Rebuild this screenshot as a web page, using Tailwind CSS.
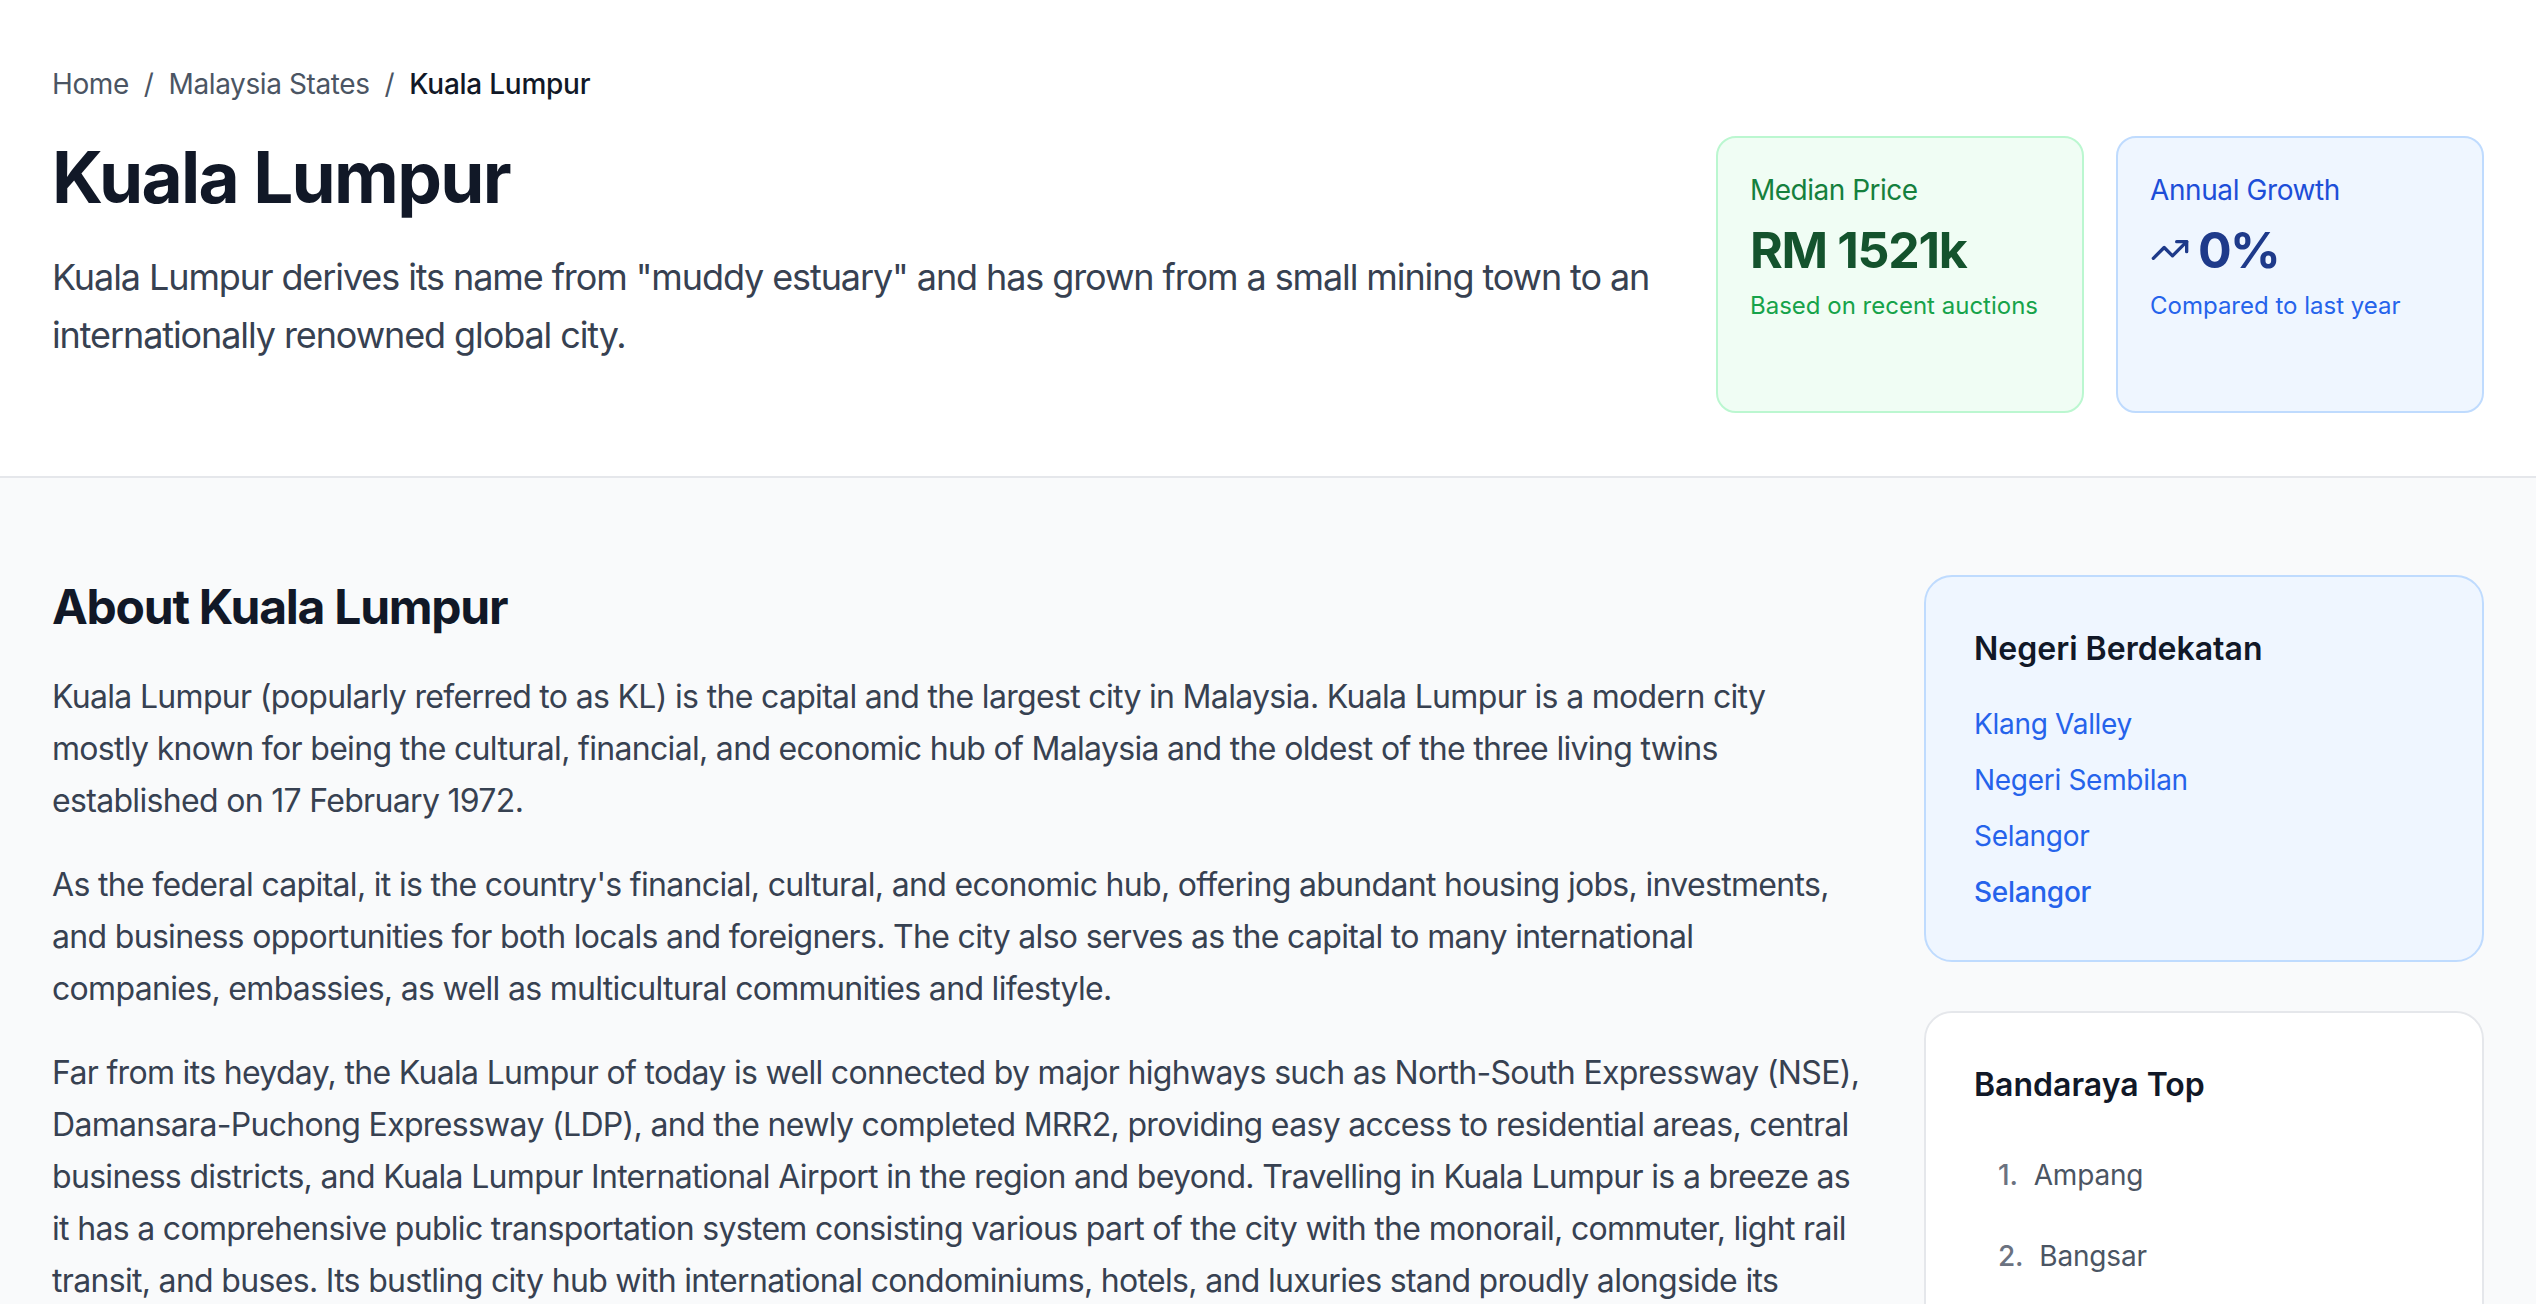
<!DOCTYPE html>
<html lang="en">
<head>
    <meta charset="UTF-8">
    <meta name="viewport" content="width=device-width, initial-scale=1.0">
    <title>Kuala Lumpur</title>
    <script src="https://cdn.jsdelivr.net/npm/@tailwindcss/browser@4"></script>
</head>
<body class="h-screen overflow-hidden bg-[#f9fafb] font-['Inter',sans-serif]">
    <!-- Header -->
    <header class="bg-white border-b-2 border-[#e5e7eb] h-[478px] px-[52px] pt-[66px]">
        <nav class="flex items-center text-[28px] leading-[36px] tracking-[-0.4px] text-[#4b5563]">
            <span>Home</span>
            <span class="mx-[15px]">/</span>
            <span>Malaysia States</span>
            <span class="mx-[15px]">/</span>
            <span class="text-[#111827] font-medium tracking-[-0.25px]">Kuala Lumpur</span>
        </nav>
        <div class="flex justify-between mt-[34px]">
            <div class="w-[1620px]">
                <h1 class="text-[71px] leading-[80px] font-bold tracking-[-1.7px] text-[#111827] mt-[1px]">Kuala Lumpur</h1>
                <p class="mt-[31px] text-[36px] leading-[58px] tracking-[-1.1px] text-[#374151]">Kuala Lumpur derives its name from "muddy estuary" and has grown from a small mining town to an internationally renowned global city.</p>
            </div>
            <div class="flex gap-[32px]">
                <div class="w-[368px] h-[277px] rounded-[20px] border-2 border-[#bbf7d0] bg-[#f0fdf4] pl-[32px] pt-[32px]">
                    <div class="text-[28px] leading-[40px] tracking-[-0.5px] text-[#15803d]">Median Price</div>
                    <div class="mt-[8px] text-[50px] leading-[64px] tracking-[-1.3px] font-bold text-[#14532d]">RM 1521k</div>
                    <div class="mt-[6px] text-[24px] leading-[36px] text-[#16a34a]">Based on recent auctions</div>
                </div>
                <div class="w-[368px] h-[277px] rounded-[20px] border-2 border-[#bfdbfe] bg-[#eff6ff] pl-[32px] pt-[32px]">
                    <div class="text-[28px] leading-[40px] tracking-[-0.4px] text-[#1d4ed8]">Annual Growth</div>
                    <div class="mt-[8px] flex items-center text-[50px] leading-[64px] font-bold tracking-[-1.6px] text-[#1e3a8a]">
                        <svg class="w-[40px] h-[40px] mr-[8px]" viewBox="0 0 24 24" fill="none" stroke="currentColor" stroke-width="2" stroke-linecap="round" stroke-linejoin="round"><polyline points="22 7 13.5 15.5 8.5 10.5 2 17"></polyline><polyline points="16 7 22 7 22 13"></polyline></svg>
                        <span>0%</span>
                    </div>
                    <div class="mt-[6px] text-[24px] leading-[36px] text-[#2563eb]">Compared to last year</div>
                </div>
            </div>
        </div>
    </header>

    <!-- Content -->
    <main class="flex justify-between px-[52px] pt-[100px]">
        <article class="w-[1812px] text-[32px] leading-[52px] tracking-[-0.68px] text-[#374151]">
            <h2 class="text-[48px] leading-[64px] font-bold tracking-[-1.25px] text-[#111827] -mt-[3px] mb-[32px]">About Kuala Lumpur</h2>
            <p class="mb-[32px]">Kuala Lumpur (popularly referred to as KL) is the capital and the largest city in Malaysia. Kuala Lumpur is a modern city mostly known for being the cultural, financial, and economic hub of Malaysia and the oldest of the three living twins established on 17 February 1972.</p>
            <p class="mb-[32px]">As the federal capital, it is the country's financial, cultural, and economic hub, offering abundant housing jobs, investments, and business opportunities for both locals and foreigners. The city also serves as the capital to many international companies, embassies, as well as multicultural communities and lifestyle.</p>
            <p>Far from its heyday, the Kuala Lumpur of today is well connected by major highways such as North-South Expressway (NSE), Damansara-Puchong Expressway (LDP), and the newly completed MRR2, providing easy access to residential areas, central business districts, and Kuala Lumpur International Airport in the region and beyond. Travelling in Kuala Lumpur is a breeze as it has a comprehensive public transportation system consisting various part of the city with the monorail, commuter, light rail transit, and buses. Its bustling city hub with international condominiums, hotels, and luxuries stand proudly alongside its</p>
        </article>
        <aside class="w-[560px] shrink-0 -mt-[3px]">
            <div class="rounded-[28px] border-2 border-[#bfdbfe] bg-[#eff6ff] h-[387px] px-[48px] pt-[50px]">
                <h3 class="text-[32px] leading-[44px] font-semibold text-[#111827]">Negeri Berdekatan</h3>
                <ul class="mt-[33px] text-[28px] leading-[40px] tracking-[-0.3px] text-[#2563eb] space-y-[16px]">
                    <li>Klang Valley</li>
                    <li>Negeri Sembilan</li>
                    <li>Selangor</li>
                    <li class="font-medium">Selangor</li>
                </ul>
            </div>
            <div class="mt-[49px] rounded-[28px] border-2 border-[#e5e7eb] bg-white h-[400px] px-[48px] pt-[50px]">
                <h3 class="text-[32px] leading-[44px] font-semibold text-[#111827]">Bandaraya Top</h3>
                <ol class="mt-[48px] text-[28px] leading-[40px] tracking-[-0.2px] text-[#4b5563] space-y-[41px]">
                    <li class="pl-[24px]"><span class="text-[#6b7280] font-medium">1.</span><span class="ml-[16px]">Ampang</span></li>
                    <li class="pl-[24px]"><span class="text-[#6b7280] font-medium">2.</span><span class="ml-[16px]">Bangsar</span></li>
                </ol>
            </div>
        </aside>
    </main>
</body>
</html>
